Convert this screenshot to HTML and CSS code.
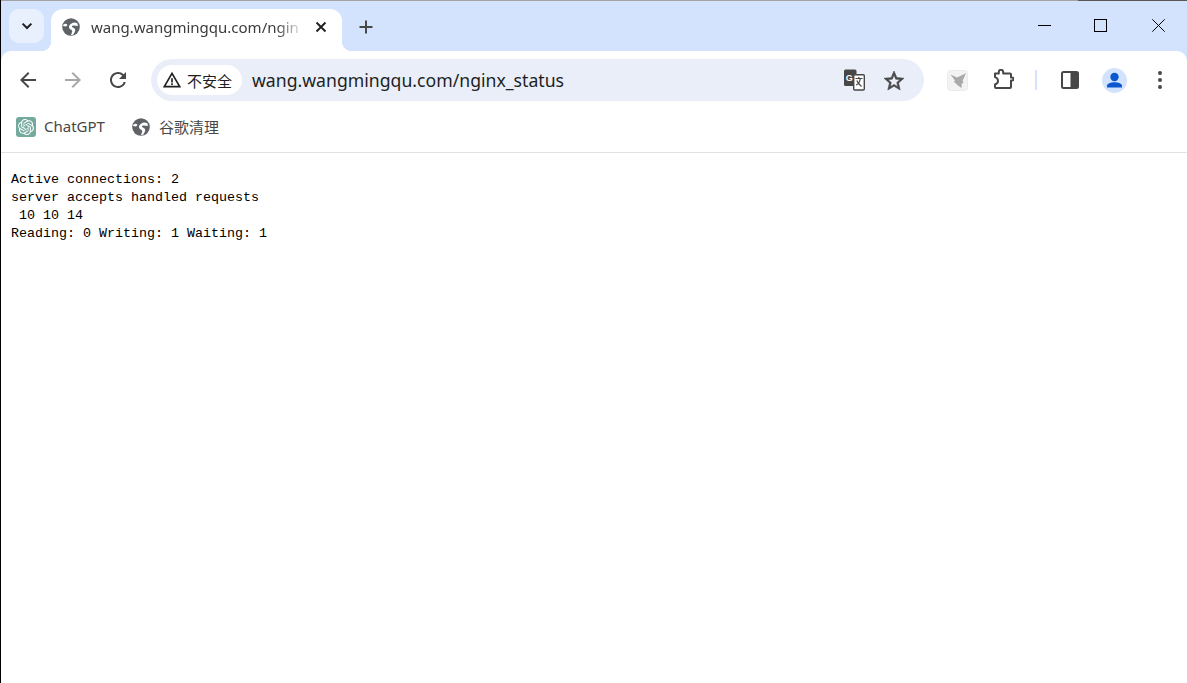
FILE: index.html
```html
<!DOCTYPE html>
<html lang="zh">
<head>
<meta charset="utf-8">
<title>wang.wangmingqu.com/nginx_status</title>
<link rel="stylesheet" href="styles.css">
</head>
<body>
<div class="window">
  <div class="topline"></div>
  <header class="titlebar">
    <button class="tab-search" aria-label="tabs">
      <svg width="14" height="14" viewBox="0 0 14 14"><path d="M2.600 4.600 7 9l4.400-4.400" fill="none" stroke="#1f1f1f" stroke-width="2"/></svg>
    </button>
    <div class="tab">
      <svg class="globe" width="20" height="20" viewBox="0 0 20 20"><circle cx="10" cy="10" r="8.800" fill="#5f6368"/><path d="M16.500 6.500C14 5 12 5.500 10.500 6.500S7.500 8.500 8 10.500s3 2 3.200 3.500-1 2.500-1.200 4l2.200-.300c.8-1.800 2-2.700 2-4.700s-3-2.300-3.300-3.500 2.500-1.500 6-.500zM2.500 7.500c1.500-1 3-1 4 .5L5 9.500 2 9z" fill="#fff"/></svg>
      <span class="tab-title">wang.wangmingqu.com/ngin</span>
      <svg class="tab-close" width="12" height="12" viewBox="0 0 12 12"><path d="M1.500 1.500l9 9M10.500 1.500l-9 9" stroke="#1f1f1f" stroke-width="1.900"/></svg>
    </div>
    <svg class="new-tab" width="14" height="14" viewBox="0 0 14 14"><path d="M7 .5v13M.5 7h13" stroke="#474747" stroke-width="2"/></svg>
    <div class="window-controls">
      <svg width="13" height="13" viewBox="0 0 13 13"><path d="M0 6.500h13" stroke="#000"/></svg>
      <svg class="maximize" width="13" height="13" viewBox="0 0 13 13"><rect x=".5" y=".5" width="12" height="12" fill="none" stroke="#000"/></svg>
      <svg class="close" width="13" height="13" viewBox="0 0 13 13"><path d="M.3.300l12.400 12.400M12.700.300L.3 12.700" stroke="#000"/></svg>
    </div>
  </header>

  <nav class="toolbar">
    <div class="nav-buttons">
      <svg class="nav-icon" viewBox="0 0 24 24"><path fill="#474747" d="M20 11H7.830l5.590-5.590L12 4l-8 8 8 8 1.410-1.410L7.830 13H20v-2z"/></svg>
      <svg class="nav-icon" viewBox="0 0 24 24"><path fill="#a8a8a8" d="M4 11h12.170l-5.590-5.590L12 4l8 8-8 8-1.410-1.410L16.170 13H4v-2z"/></svg>
      <svg class="nav-icon" viewBox="0 0 24 24"><path fill="#474747" d="M17.650 6.350A7.958 7.958 0 0 0 12 4c-4.420 0-7.990 3.580-7.990 8s3.570 8 7.990 8c3.730 0 6.840-2.550 7.730-6h-2.080A5.990 5.990 0 0 1 12 18c-3.310 0-6-2.690-6-6s2.690-6 6-6c1.660 0 3.140.690 4.220 1.780L13 11h7V4l-2.350 2.350z"/></svg>
    </div>
    <div class="omnibox">
      <div class="security-chip">
        <svg width="20" height="20" viewBox="0 0 24 24"><path fill="#1f1f1f" d="M1 21h22L12 2 1 21zm3.470-2L12 5.990 19.530 19H4.470zM11 16h2v2h-2zm0-6h2v5h-2z"/></svg>
        <span>不安全</span>
      </div>
      <span class="url">wang.wangmingqu.com/nginx_status</span>
      <svg class="translate" width="22" height="22" viewBox="0 0 22 22">
        <rect x="1" y="0.500" width="12.500" height="16.500" rx="1.500" fill="#474747"/>
        <rect x="10.700" y="5.700" width="10.600" height="15.300" rx="1" fill="#fff" stroke="#474747" stroke-width="1.400"/>
        <text x="2.800" y="11.500" class="translate-g">G</text>
        <path d="M12.500 9.500h7M15.800 8v1.500M13 16c2.600-1 3.900-3.200 4.300-6.500M13.800 11.500c1 2.300 2.500 4.200 4.700 6" fill="none" stroke="#474747" stroke-width="1.200"/>
      </svg>
      <svg class="star" width="24" height="24" viewBox="0 0 24 24"><path fill="#474747" stroke="#474747" stroke-width=".6" d="M22 9.240l-7.190-.620L12 2 9.190 8.630 2 9.240l5.460 4.730L5.820 21 12 17.270 18.180 21l-1.630-7.030L22 9.240zM12 15.400l-3.760 2.270 1-4.280-3.320-2.880 4.380-.380L12 6.100l1.710 4.040 4.380.380-3.320 2.880 1 4.280L12 15.400z"/></svg>
    </div>
    <div class="actions">
      <svg class="bird" width="21" height="21" viewBox="0 0 21 21">
        <rect x=".5" y=".5" width="20" height="20" rx="3" fill="#f3f3f3" stroke="#ebebeb"/>
        <path d="M3.500 4.500l6.500 3 9-4.200-3.400 7.400 1 2.300-1.800.3-.3 4.700-3.800-2.800-4-3.700 1.500-.7z" fill="#a9a9a9"/>
      </svg>
      <svg class="puzzle" width="22" height="22" viewBox="0 0 22 22">
        <path fill="none" stroke="#474747" stroke-width="2" stroke-linejoin="round" d="M3 4.500h3.800V3a2.200 2.200 0 0 1 4.400 0v1.500H18a1 1 0 0 1 1 1v3h1a1.500 1.500 0 0 1 0 3h-1V18a1 1 0 0 1-1 1H4a1 1 0 0 1-1-1v-2.500c2-.5 3-2 3-3.700s-1-3.200-3-3.700z"/>
      </svg>
      <span class="separator"></span>
      <svg class="panel" width="18" height="18" viewBox="0 0 18 18">
        <rect x="1" y="1" width="16" height="16" rx="1.500" fill="#fff" stroke="#474747" stroke-width="2"/>
        <rect x="9.500" y="1" width="7.500" height="16" fill="#474747"/>
      </svg>
      <svg class="avatar" width="25" height="25" viewBox="0 0 25 25">
        <circle cx="12.500" cy="12.500" r="12.500" fill="#d3e3fd"/>
        <circle cx="12.500" cy="9" r="4.200" fill="#0b57d0"/>
        <path d="M5 19.500v-1.700c0-2.300 3.700-3.600 7.500-3.600s7.500 1.300 7.500 3.600v1.700z" fill="#0b57d0"/>
      </svg>
      <svg class="menu" width="4" height="18" viewBox="0 0 4 18"><circle cx="2" cy="2" r="2" fill="#474747"/><circle cx="2" cy="9" r="2" fill="#474747"/><circle cx="2" cy="16" r="2" fill="#474747"/></svg>
    </div>
  </nav>

  <div class="bookmarks">
    <a class="bookmark">
      <span class="gpt-icon">
        <svg width="16" height="16" viewBox="0 0 24 24"><path fill="#fff" d="M22.282 9.821a5.985 5.985 0 0 0-.516-4.910 6.046 6.046 0 0 0-6.510-2.900A6.065 6.065 0 0 0 4.981 4.180a5.985 5.985 0 0 0-3.998 2.900 6.046 6.046 0 0 0 .743 7.097 5.980 5.980 0 0 0 .510 4.911 6.051 6.051 0 0 0 6.515 2.900A5.985 5.985 0 0 0 13.260 24a6.056 6.056 0 0 0 5.772-4.206 5.990 5.990 0 0 0 3.997-2.900 6.056 6.056 0 0 0-.747-7.073zM13.260 22.430a4.476 4.476 0 0 1-2.876-1.040l.141-.081 4.779-2.758a.795.795 0 0 0 .392-.681v-6.737l2.020 1.168a.071.071 0 0 1 .038.052v5.583a4.504 4.504 0 0 1-4.494 4.494zM3.600 18.304a4.470 4.470 0 0 1-.535-3.014l.142.085 4.783 2.759a.771.771 0 0 0 .780 0l5.843-3.369v2.332a.080.080 0 0 1-.033.062L9.740 19.950a4.500 4.500 0 0 1-6.140-1.646zM2.340 7.896a4.485 4.485 0 0 1 2.366-1.973V11.600a.766.766 0 0 0 .388.676l5.815 3.355-2.020 1.168a.076.076 0 0 1-.071 0l-4.830-2.786A4.504 4.504 0 0 1 2.340 7.872zm16.597 3.855l-5.833-3.387L15.119 7.200a.076.076 0 0 1 .071 0l4.830 2.791a4.494 4.494 0 0 1-.676 8.105v-5.678a.790.790 0 0 0-.407-.667zm2.010-3.023l-.141-.085-4.774-2.782a.776.776 0 0 0-.785 0L9.409 9.230V6.897a.066.066 0 0 1 .028-.061l4.830-2.787a4.500 4.500 0 0 1 6.680 4.660zm-12.640 4.135l-2.020-1.164a.080.080 0 0 1-.038-.057V6.075a4.500 4.500 0 0 1 7.375-3.453l-.142.080L8.704 5.460a.795.795 0 0 0-.393.681zm1.097-2.365l2.602-1.500 2.607 1.500v2.999l-2.597 1.500-2.607-1.500z"/></svg>
      </span>
      <span class="bookmark-label">ChatGPT</span>
    </a>
    <a class="bookmark">
      <svg class="globe" width="20" height="20" viewBox="0 0 20 20"><circle cx="10" cy="10" r="8.800" fill="#5f6368"/><path d="M16.500 6.500C14 5 12 5.500 10.500 6.500S7.500 8.500 8 10.500s3 2 3.200 3.500-1 2.500-1.200 4l2.200-.300c.8-1.800 2-2.700 2-4.700s-3-2.300-3.300-3.500 2.500-1.500 6-.500zM2.500 7.500c1.500-1 3-1 4 .5L5 9.500 2 9z" fill="#fff"/></svg>
      <span class="bookmark-label">谷歌清理</span>
    </a>
  </div>

  <main class="page">
<pre class="status">Active connections: 2
server accepts handled requests
 10 10 14
Reading: 0 Writing: 1 Waiting: 1</pre>
  </main>
</div>
</body>
</html>
```

FILE: styles.css
```css
* { box-sizing: border-box; }

html, body {
  margin: 0;
  height: 100%;
  background: #fff;
  overflow: hidden;
}

body {
  font-family: "Noto Sans", "Noto Sans CJK SC", sans-serif;
  color: #1f1f1f;
}

svg { display: block; flex: none; }

.window {
  height: 683px;
  border-left: 1px solid #000;
  background: #d3e3fd;
  display: flex;
  flex-direction: column;
}

.topline {
  height: 1px;
  flex: none;
  background: linear-gradient(to right, #a3a3a3 1077px, #5b5750 1077px);
}

.titlebar {
  height: 50px;
  flex: none;
  display: flex;
  align-items: flex-start;
  padding: 8px 0 0 8px;
}

.tab-search {
  width: 35px;
  height: 34px;
  border: 0;
  padding: 0;
  border-radius: 10px;
  background: #e8f0fe;
  display: flex;
  align-items: center;
  justify-content: center;
}

.tab {
  position: relative;
  width: 291px;
  height: 42px;
  margin-left: 7px;
  background: #fff;
  border-radius: 12px 12px 0 0;
  display: flex;
  align-items: center;
  padding: 0 15px 6px 10px;
}

.tab::before,
.tab::after {
  content: "";
  position: absolute;
  bottom: 0;
  width: 10px;
  height: 10px;
}

.tab::before {
  left: -10px;
  background: radial-gradient(circle at 0 0, transparent 10px, #fff 10.5px);
}

.tab::after {
  right: -10px;
  background: radial-gradient(circle at 100% 0, transparent 10px, #fff 10.5px);
}

.tab-title {
  margin-left: 10px;
  font-size: 15px;
  line-height: 20px;
  color: #3c3c3c;
  white-space: nowrap;
  -webkit-mask-image: linear-gradient(to right, #000 185px, rgba(0, 0, 0, .2) 100%);
  mask-image: linear-gradient(to right, #000 185px, rgba(0, 0, 0, .2) 100%);
}

.tab-close { margin-left: auto; }

.new-tab {
  margin: 11px 0 0 17px;
}

.window-controls {
  margin-left: auto;
  display: flex;
  padding: 10px 22px 0 0;
}

.maximize { margin-left: 43px; }
.close { margin-left: 45px; }

.toolbar {
  height: 54px;
  flex: none;
  background: #fff;
  border-radius: 10px 10px 0 0;
  display: flex;
  align-items: flex-start;
  padding: 8px 0 0 9px;
}

.nav-buttons {
  display: flex;
  gap: 21px;
  width: 141px;
  padding: 9px 0 0 6px;
}

.nav-icon { width: 24px; height: 24px; }

.omnibox {
  width: 773px;
  height: 42px;
  border-radius: 21px;
  background: #e9eef8;
  display: flex;
  align-items: center;
  padding: 0 18px 0 6px;
}

.security-chip {
  width: 85px;
  height: 30px;
  border-radius: 15px;
  background: #fff;
  display: flex;
  align-items: center;
  gap: 5px;
  padding-left: 5px;
  font-family: "Noto Sans CJK SC", sans-serif;
  font-size: 15px;
}

.url {
  margin-left: 10px;
  font-size: 17.65px;
  color: #1f1f1f;
  white-space: nowrap;
}

.translate { margin-left: auto; }

.translate-g {
  font-family: "Liberation Sans", sans-serif;
  font-size: 9px;
  font-weight: 700;
  fill: #fff;
}

.star { margin: 2px 0 0 17px; }

.actions {
  display: flex;
  align-items: center;
  height: 42px;
}

.bird { margin-left: 23px; }
.puzzle { margin-left: 24px; }

.separator {
  width: 2px;
  height: 20px;
  margin-left: 21px;
  background: #d3e3fd;
}

.panel { margin-left: 24px; }
.avatar { margin-left: 23px; }
.menu { margin-left: 31px; }

.bookmarks {
  height: 48px;
  flex: none;
  background: #fff;
  border-bottom: 1px solid #e1e1e1;
  display: flex;
  align-items: flex-start;
  padding: 12px 0 0 15px;
  font-size: 15px;
  color: #474747;
  gap: 26px;
}

.bookmark {
  display: flex;
  align-items: center;
  gap: 8px;
  height: 20px;
  font-family: "Noto Sans", "Noto Sans CJK SC", sans-serif;
}

.bookmark-label { padding-bottom: 2px; }

.gpt-icon {
  width: 20px;
  height: 20px;
  border-radius: 3px;
  background: #74aa9c;
  display: flex;
  align-items: center;
  justify-content: center;
}

.page {
  flex: 1;
  background: #fff;
  padding: 18px 0 0 10px;
}

.status {
  margin: 0;
  font-family: "Liberation Mono", monospace;
  font-size: 13.33px;
  line-height: 18px;
  color: #000;
}
```
